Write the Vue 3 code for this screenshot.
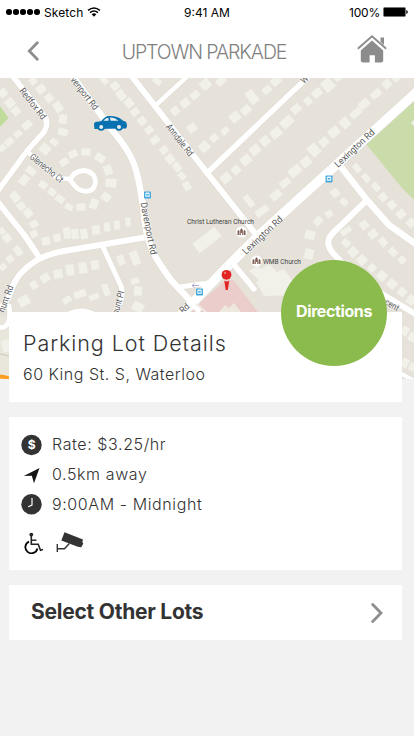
<script setup>
import { ref } from 'vue';

const lot = ref({
  name: 'UPTOWN PARKADE',
  title: 'Parking Lot Details',
  address: '60 King St. S, Waterloo',
});

const details = ref([
  { icon: 'rate', label: 'Rate: $3.25/hr' },
  { icon: 'distance', label: '0.5km away' },
  { icon: 'hours', label: '9:00AM - Midnight' },
]);

const signalDots = 5;

// centre x, centre y, width, height, rotation
const buildings = [
  // Redfox Rd
  [33, 81, 7, 7, 52], [41, 89, 8, 9, 52], [49, 98, 8, 8, 52], [58, 107, 10, 8, 55], [63, 119, 8, 9, 5], [63, 132, 10, 7, 15],
  [3, 93, 8, 8, 50], [10, 103, 9, 9, 50], [16, 111, 8, 8, 50], [27, 125, 10, 7, -40], [18, 134, 8, 6, -40], [9, 142, 9, 7, -42], [2, 148, 7, 6, -42],
  // Glenecho Ct
  [45, 149, 10, 9, 40], [54, 142, 8, 6, 40], [64, 162, 9, 7, -32], [73, 154, 9, 7, -25], [86, 152, 9, 7, 3], [100, 158, 10, 8, 32],
  [108, 170, 8, 10, -20], [111, 183, 11, 9, 4], [106, 197, 9, 8, 35], [94, 204, 8, 10, 20], [81, 207, 9, 7, 0], [69, 207, 8, 6, 28],
  [60, 199, 9, 7, 35], [52, 192, 8, 7, 35], [43, 185, 8, 7, 35], [31, 171, 10, 7, 38], [24, 180, 8, 10, 38], [15, 197, 10, 8, 52],
  [21, 206, 8, 8, -38], [28, 213, 8, 9, -38], [34, 224, 8, 7, -32],
  // strip above the crossing road
  [34, 234, 7, 7, -20], [46, 241, 8, 8, -10], [57, 238, 7, 8, -10], [67, 233, 7, 11, -8], [75, 234, 7, 10, -8], [84, 234, 7, 10, -8],
  [96, 230, 8, 9, -8], [107, 227, 6, 9, -5], [117, 225, 6, 9, -5], [128, 222, 5, 9, -5],
  [2, 231, 6, 7, -38], [7, 238, 8, 8, -38], [18, 251, 7, 10, -38], [10, 259, 7, 7, -38], [3, 267, 7, 6, -38],
  // below the crossing road
  [34, 285, 7, 8, -30], [45, 278, 9, 8, -28], [58, 274, 9, 9, -8], [70, 270, 8, 11, -6], [83, 268, 8, 11, -8], [95, 265, 8, 9, -8],
  [121, 260, 7, 10, -22], [135, 258, 8, 14, -22], [24, 301, 11, 10, -30], [67, 300, 9, 6, -35], [80, 294, 12, 7, -18],
  [94, 297, 10, 6, -20], [106, 290, 6, 12, -18], [135, 281, 8, 6, -15], [138, 291, 8, 9, 5], [138, 307, 11, 9, 28],
  [6, 346, 8, 12, -15],
  // east of Davenport Rd
  [104, 80, 9, 6, 52], [115, 86, 8, 8, 52], [121, 95, 10, 8, 52], [129, 103, 9, 8, 52], [135, 112, 7, 8, 52], [142, 121, 8, 8, 52],
  [149, 130, 7, 8, 52], [155, 140, 7, 9, 52], [164, 150, 7, 8, 52], [170, 159, 9, 8, 52], [177, 167, 9, 7, 52], [182, 176, 8, 6, 52], [187, 186, 9, 7, 62],
  // north of Anndale Rd
  [157, 81, 9, 6, 38], [175, 111, 8, 8, -38], [185, 103, 9, 8, -38], [195, 95, 9, 7, -38], [205, 84, 10, 8, -38], [192, 128, 9, 8, -38], [204, 147, 9, 9, -38],
  // between the two northern roads
  [206, 84, 8, 10, -42], [221, 81, 10, 7, -42], [235, 117, 9, 10, 48], [246, 110, 8, 10, 48], [252, 97, 9, 14, -38], [267, 90, 9, 7, -40], [276, 81, 10, 8, -42],
  [205, 146, 8, 9, -42], [214, 138, 8, 7, -42], [225, 131, 8, 6, -42],
  [226, 178, 9, 10, 50], [236, 170, 8, 8, 50], [246, 160, 9, 10, 50], [255, 150, 9, 10, 50], [265, 141, 9, 9, 50], [276, 133, 11, 9, -40],
  [287, 122, 13, 9, -42], [296, 109, 10, 8, -42], [308, 101, 7, 8, -42], [317, 93, 10, 8, -42], [328, 85, 11, 12, -42], [338, 78, 7, 6, -42],
  // along Lexington Rd
  [249, 201, 6, 13, -38], [262, 211, 14, 7, -35], [276, 195, 11, 8, -40], [285, 183, 11, 7, -40], [295, 171, 13, 9, -38],
  [306, 162, 10, 9, -40], [314, 150, 10, 12, -42], [324, 142, 9, 8, -40], [334, 132, 11, 9, -38], [345, 123, 9, 10, -42],
  [356, 113, 12, 7, -40], [364, 104, 11, 8, -40], [376, 94, 11, 7, -40], [387, 84, 8, 8, -42], [397, 78, 8, 6, -42],
  // eastern streets
  [357, 168, 6, 9, -40], [366, 178, 6, 9, -40], [376, 187, 6, 9, -40], [383, 197, 8, 8, -40], [392, 205, 8, 8, -40], [401, 214, 9, 8, -40], [411, 223, 8, 8, -40],
  [335, 193, 8, 8, -35], [344, 202, 8, 6, 40], [329, 214, 7, 7, -35], [318, 221, 9, 7, -45], [310, 235, 10, 9, 12], [309, 254, 9, 10, 15],
  [346, 231, 11, 6, -35], [364, 225, 8, 8, -35], [373, 234, 9, 8, -38], [383, 242, 9, 7, 48], [393, 252, 9, 7, 48], [402, 260, 7, 7, -38],
  [346, 243, 8, 7, 40], [353, 252, 9, 9, 48], [362, 260, 9, 9, 48], [372, 268, 7, 8, 45], [382, 276, 9, 9, 42], [392, 284, 9, 9, 40], [402, 292, 8, 8, 40], [411, 300, 8, 9, 35],
  [405, 331, 7, 9, 30], [412, 337, 7, 9, 30], [405, 363, 7, 9, 30], [412, 367, 6, 8, 30],
  [207, 240, 28, 12, -38],
];

const roads = [
  { d: 'M11 74 L43 114 Q50 122 44 132 Q34 143 27 151 L-3 192', w: 5.5 },
  { d: 'M27 151 C37 162 48 170 57 178 L70 179', w: 4.5 },
  { d: 'M70 180 C75 170 82 170 87 171 C100 175 96 191 88 191 C79 193 74 185 70 180', w: 5 },
  { d: 'M71 74 L112 130 Q129 150 134 164 Q141 184 145 224 C149 250 158 262 171 280 L198 309', w: 6.5 },
  { d: 'M130 74 L208 174 L258 237', w: 6 },
  { d: 'M155 106 L192 72', w: 4.5 },
  { d: 'M207 173 L311 74', w: 5.5 },
  { d: 'M420 89 L258 236 L226 268 L182 314', w: 9.5 },
  { d: 'M338 163 L367 200 L389 225 L420 247', w: 6.5 },
  { d: 'M367 200 L333 233 Q324 242 332 252 L356 278 L420 317', w: 6 },
  { d: 'M-3 201 L25 236 L39 257', w: 6 },
  { d: 'M147 237 L70 250 C44 254 33 261 22 272 C9 285 12 298 2 306', w: 6 },
  { d: 'M103 247 L121 286 Q125 299 114 314', w: 5 },
  { d: 'M180 287 L215 282', w: 5 },
  { d: 'M235 266 L254 289', w: 5.5 },
  { d: 'M70 314 Q82 308 97 316', w: 6 },
  { d: 'M-4 327 Q13 331 9 306', w: 5 },
  { d: 'M402 374 L416 382', w: 4 },
];

const stops = [[147.5, 195], [329, 179], [199.5, 292]];
const churches = [[241.5, 232], [256.5, 261]];

const labels = [
  { text: 'Redfox Rd', x: 19, y: 91, angle: 52, length: 37 },
  { text: 'Glenecho Ct', x: 29, y: 158, angle: 39, length: 40 },
  { text: 'venport Rd', x: 70, y: 80, angle: 52, length: 39 },
  { text: 'Davenport Rd', x: 140.5, y: 203, angle: 79, length: 53 },
  { text: 'Anndale Rd', x: 165.5, y: 127, angle: 52, length: 38 },
  { text: 'Lexington Rd', x: 338, y: 168, angle: -43, length: 51 },
  { text: 'Lexington Rd', x: 246, y: 255, angle: -43, length: 51 },
  { text: 'W', x: 304, y: 84, angle: -43, length: 7 },
  { text: 'hunt Rd', x: 4, y: 313, angle: -70, length: 28 },
  { text: 'hunt Pl', x: 118, y: 315, angle: -74, length: 24 },
  { text: 'Rd', x: 183, y: 314, angle: -43, length: 10 },
  { text: 'cent', x: 384, y: 304, angle: 30, length: 15 },
];
</script>

<template>
  <div class="screen">
    <header class="header">
      <div class="status-bar">
        <div class="carrier">
          <span v-for="n in signalDots" :key="n" class="dot"></span>
          <span class="carrier-name">Sketch</span>
          <svg class="wifi" viewBox="0 0 14 10" width="14" height="10">
            <path d="M1 3.4 Q7 -1.4 13 3.4 M3 5.6 Q7 2.3 11 5.6" fill="none" stroke="#000" stroke-width="1.5" />
            <path d="M4.7 7.3 Q7 5.4 9.3 7.3 L7 9.7 Z" />
          </svg>
        </div>
        <span class="time">9:41 AM</span>
        <div class="power">
          <span class="percent">100%</span>
          <svg viewBox="0 0 25 10" width="25" height="10">
            <rect x=".5" y=".5" width="22" height="9" rx="1.2" fill="#000" stroke="#777" />
            <path d="M23.3 3 Q24.8 3.4 24.8 5 Q24.8 6.6 23.3 7 Z" />
          </svg>
        </div>
      </div>
      <nav class="nav">
        <svg class="back" viewBox="0 0 12 20" width="12" height="20">
          <path d="M10.3 1.7 L2.3 10 L10.3 18.3" />
        </svg>
        <h1 class="lot-name">{{ lot.name }}</h1>
        <svg class="home" viewBox="0 0 30 28" width="30" height="28">
          <path d="M23.5 2.5 H27 V10 L23.5 6.8 Z" />
          <path d="M15 5.6 L26.2 15.6 V25.5 Q26.2 27.6 24 27.6 H17.9 V20.3 H12.6 V27.6 H6 Q3.8 27.6 3.8 25.5 V15.6 Z" />
          <path class="roof" d="M.8 13.7 L15 1.2 L29.2 13.7" />
        </svg>
      </nav>
    </header>

    <svg class="map" viewBox="0 78 414 301" width="414" height="301">
      <rect x="0" y="78" width="414" height="301" fill="#e6e2da" />
      <path d="M414 97 L366 144 L402 188 L414 200 Z" fill="#cbdcab" />
      <path d="M411 123 l3 -3 v6 Z" fill="#f1f1e9" />
      <path d="M0 106 L8.5 118 L0 127 Z" fill="#bfdc9c" />
      <path d="M184 316 L226 280 Q232 278 235 282 L261 316 Z" fill="#ebcdcb" />
      <path d="M0 316 H9 V379 H0 Z" fill="#e9e6dc" />
      <path d="M0 354 L9 356" stroke="#cbc7ba" />
      <path d="M249 271 l9 -5 3 3 8 -5 8 8 7 -3 16 22 -3 4 -33 1 -8 -14 3 -2 Z" fill="#f1f1e9" />
      <path d="M216 316 l9 -11 4 3 5 -5 10 13 Z" fill="#eee9df" />
      <rect
        v-for="(b, i) in buildings"
        :key="i"
        :x="b[0] - b[2] / 2"
        :y="b[1] - b[3] / 2"
        :width="b[2]"
        :height="b[3]"
        :transform="`rotate(${b[4]} ${b[0]} ${b[1]})`"
        fill="#f1f1e9"
      />
      <g fill="none" stroke-linejoin="round" stroke-linecap="round">
        <path v-for="(r, i) in roads" :key="i" :d="r.d" :stroke-width="r.w + 1" stroke="#dfdad2" />
        <path v-for="(r, i) in roads" :key="i" :d="r.d" :stroke-width="r.w" stroke="#fff" />
      </g>
      <path d="M196 304 L208 314" stroke="#f0e9e6" stroke-width="2" />
      <path d="M0 376.5 Q5 376.7 9 378.5" fill="none" stroke="#fb9d1f" stroke-width="4" />

      <g class="street-names">
        <text
          v-for="(l, i) in labels"
          :key="i"
          :textLength="l.length"
          lengthAdjust="spacingAndGlyphs"
          :transform="`translate(${l.x} ${l.y}) rotate(${l.angle})`"
        >{{ l.text }}</text>
      </g>
      <path d="M192 285.5 h7 M194.5 283.5 l-2.5 2 2.5 2" fill="none" stroke="#aaaacc" />

      <g v-for="(s, i) in stops" :key="'s' + i" :transform="`translate(${s[0] - 3.5} ${s[1] - 3.5})`">
        <rect width="7" height="7" rx=".8" fill="#43a9df" />
        <path d="M2 1 h3 l.7 1 v3.3 h-4.4 v-3.3 Z" fill="#eaf7ff" />
        <rect x="2.2" y="2.5" width="2.6" height="1.4" fill="#43a9df" />
      </g>
      <g v-for="(c, i) in churches" :key="'c' + i" :transform="`translate(${c[0]} ${c[1]})`">
        <circle r="5.5" fill="#fff" />
        <path d="M-4 3 v-4 l1 -1 1 1 v4 Z M-1.3 3 v-5 l1.3 -2 1.3 2 v5 h-.8 v-2 h-1 v2 Z M2 3 v-4 l1 -1 1 1 v4 Z" fill="#806057" />
      </g>
      <g class="places">
        <text x="187" y="224" textLength="67">Christ Lutheran Church</text>
        <text x="263" y="263.5" textLength="38">WMB Church</text>
      </g>

      <!-- car marker -->
      <g fill="#0871b0">
        <path d="M94 124.5 Q94 122 97 121.8 L101 121.2 Q105 116 109.5 116 Q115 115.8 119.5 118 L123.5 121 Q126.8 121.4 126.8 124.5 L127 126.5 L126 128.5 L94.5 129 Z" />
        <circle cx="101.2" cy="127" r="3.8" />
        <circle cx="119" cy="127" r="3.8" />
        <g fill="#e9eef0">
          <circle cx="101.2" cy="127" r="2" />
          <circle cx="119" cy="127" r="2" />
          <path d="M103.5 120.8 Q105.5 117.7 108.5 117.7 V120.8 Z M110 117.6 Q114.5 117.2 118.5 120.8 H110.5 Z" />
        </g>
      </g>

      <!-- parking lot pin -->
      <path d="M224.3 280.5 Q227 282.5 229.3 280.5 L227.8 290 H225.7 Z" fill="#e32526" />
      <circle cx="226.5" cy="274.8" r="4.9" fill="#e32526" />
      <circle cx="225" cy="273" r="1.1" fill="#f18b84" />
    </svg>

    <main class="cards">
      <section class="card title-card">
        <h2 class="title">{{ lot.title }}</h2>
        <p class="address">{{ lot.address }}</p>
        <button class="directions">Directions</button>
      </section>

      <section class="card info-card">
        <div v-for="item in details" :key="item.icon" class="info-row">
          <svg class="info-icon" viewBox="0 0 22 22" width="22" height="22">
            <template v-if="item.icon === 'rate'">
              <circle cx="10.5" cy="11" r="10.2" />
              <text x="10.7" y="15.3" text-anchor="middle" class="dollar">$</text>
            </template>
            <path v-else-if="item.icon === 'distance'" d="M2.8 12 L18.5 4 L13 19.2 L10.8 11.7 Z" fill="#161616" />
            <template v-else>
              <circle cx="10.5" cy="9.7" r="10.2" transform="translate(0 .6)" />
              <path d="M11 4 V11 L7.2 12.7" fill="none" stroke="#fff" stroke-width="1.2" />
            </template>
          </svg>
          <span class="info-label">{{ item.label }}</span>
        </div>
        <div class="amenities">
          <svg viewBox="0 0 20 22" width="20" height="22">
            <circle cx="7.3" cy="2.6" r="1.9" fill="#222" />
            <path d="M7.3 4 V12.3 H14.2 L16.5 18.3 L19 17.5" fill="none" stroke="#222" stroke-width="1.6" />
            <path d="M7.3 8.2 H12.5" stroke="#222" stroke-width="1.4" />
            <path d="M5 9.6 A6.1 6.1 0 1 0 13.4 16.5" fill="none" stroke="#050505" stroke-width="1.8" />
          </svg>
          <svg viewBox="0 0 28 22" width="28" height="22">
            <path d="M8.5 .2 L27 7.5 L26.3 10 L27.3 11.4 L25.3 15.2 L21.8 14.7 L5.3 8.6 Z" fill="#333" />
            <path d="M1.3 12 V20 M1 16.7 H8.5 L13.3 11.5" fill="none" stroke="#333" stroke-width="1.4" />
          </svg>
        </div>
      </section>

      <section class="card other-card">
        <span class="other-label">Select Other Lots</span>
        <svg class="next" viewBox="0 0 12 20" width="12" height="20">
          <path d="M1.7 1.5 L10 10 L1.7 18.5" />
        </svg>
      </section>
    </main>
  </div>
</template>

<style>
body {
  background: #f2f2f2;
}
</style>

<style scoped>
.screen {
  width: 414px;
  height: 736px;
  overflow: hidden;
  background: #f2f2f2;
  font-family: Inter, 'Liberation Sans', sans-serif;
  color: #333;
}

.header {
  height: 78px;
  background: #fff;
}

.status-bar {
  display: grid;
  grid-template-columns: 1fr auto 1fr;
  align-items: center;
  height: 24px;
  padding: 0 6px;
  font-size: 12px;
  color: #000;
}

.carrier {
  display: flex;
  align-items: center;
  gap: 1.5px;
}

.dot {
  width: 5.5px;
  height: 5.5px;
  border-radius: 50%;
  background: #000;
}

.carrier-name {
  margin: 1px 2px 0 3px;
  letter-spacing: 0.1px;
}

.time {
  margin-top: 1px;
}

.power {
  display: flex;
  justify-content: flex-end;
  align-items: center;
  gap: 3px;
}

.percent {
  margin-top: 1px;
  letter-spacing: -0.2px;
}

.nav {
  display: flex;
  justify-content: space-between;
  align-items: center;
  height: 54px;
  padding: 0 27px;
}

.back,
.next {
  fill: none;
  stroke: #8e8e8e;
  stroke-width: 2.8;
  stroke-linecap: round;
}

.lot-name {
  margin: 1px 0 0 12px;
  font-size: 19.5px;
  font-weight: 300;
  letter-spacing: -1.1px;
  color: #808080;
}

.home {
  margin-top: -5px;
  fill: #8c8c8c;
}

.roof {
  fill: none;
  stroke: #8c8c8c;
  stroke-width: 1.8;
}

.map {
  display: block;
}

.street-names {
  font-family: Roboto, sans-serif;
  font-size: 9.5px;
  fill: #5a5a5a;
  stroke: #fff;
  stroke-width: 1px;
  paint-order: stroke;
}

.places {
  font-family: Roboto, sans-serif;
  font-size: 6.6px;
  fill: #444;
}

.cards {
  display: flex;
  flex-direction: column;
  gap: 15px;
  position: relative;
  margin: -67px 12px 0 9px;
}

.card {
  box-sizing: border-box;
  background: #fff;
}

.title-card {
  position: relative;
  height: 90px;
  padding: 18px 14px 0;
}

.title {
  margin: 0;
  font-size: 21.5px;
  font-weight: 350;
  line-height: 26px;
  letter-spacing: 0.93px;
}

.address {
  margin: 8px 0 0;
  font-size: 16px;
  font-weight: 350;
  line-height: 20px;
  letter-spacing: 0.5px;
}

.directions {
  position: absolute;
  top: -52px;
  left: 272px;
  width: 106px;
  height: 106px;
  padding: 0 0 4px;
  border: 0;
  border-radius: 50%;
  background: #8bbb4c;
  color: #fff;
  font-family: inherit;
  font-size: 16px;
  font-weight: 650;
  letter-spacing: -0.4px;
}

.info-card {
  height: 153px;
  padding: 13px 12px 0;
}

.info-row {
  display: flex;
  align-items: center;
  gap: 9px;
  height: 30px;
}

.info-icon {
  fill: #333;
  overflow: visible;
}

.dollar {
  font-size: 12px;
  font-weight: 700;
  fill: #fff;
}

.info-label {
  margin-top: -2px;
  font-size: 16px;
  font-weight: 350;
  letter-spacing: 0.6px;
}

.amenities {
  display: flex;
  gap: 12px;
  padding: 12px 0 0 3px;
}

.other-card {
  display: flex;
  justify-content: space-between;
  align-items: center;
  height: 55px;
  padding: 0 19px 0 22px;
}

.other-label {
  margin-top: -2px;
  font-size: 21px;
  font-weight: 650;
  letter-spacing: -0.25px;
}
</style>
